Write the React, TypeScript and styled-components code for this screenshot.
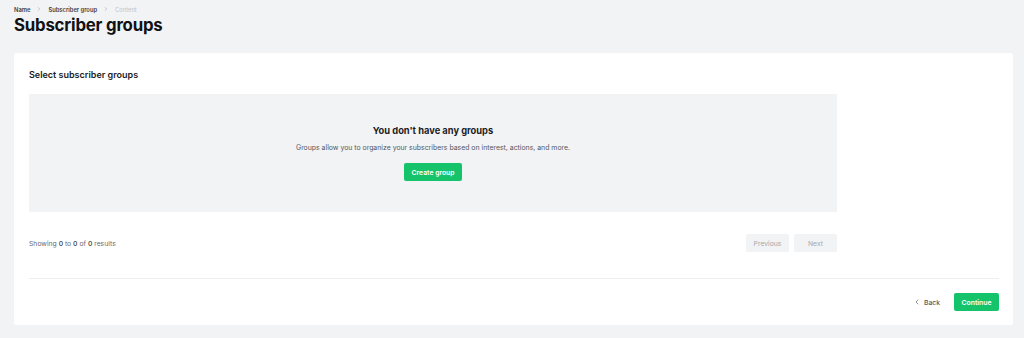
import styled, { createGlobalStyle } from 'styled-components'
import { ChevronLeft, ChevronRight } from 'lucide-react'

const GlobalStyle = createGlobalStyle`
	body {
		margin: 0;
		background: #f2f3f5;
		font-family: 'Inter', 'Liberation Sans', sans-serif;
		color: #1b1c1f;
	}
`

const Page = styled.div`
	padding: 4px 11px 13px 14px;
`

const Breadcrumb = styled.div`
	display: flex;
	align-items: center;
	gap: 6px;
	height: 10px;
	font-size: 5.8px;
	color: #3a3b3f;
`

const Crumb = styled.span<{ $muted?: boolean }>`
	color: ${p => (p.$muted ? '#c2c4c8' : '#404145')};
	font-weight: ${p => (p.$muted ? 400 : 600)};
`

const Sep = styled(ChevronRight)`
	color: #9a9ca1;
`

const Title = styled.h1`
	margin: 1px 0 17px;
	font-size: 16.8px;
	line-height: 21px;
	font-weight: 700;
	letter-spacing: -0.2px;
	color: #111214;
`

const Card = styled.div`
	background: #fff;
	border-radius: 2px;
	padding: 16px 14px 14px 15px;
`

const Upper = styled.div`
	max-width: 808px;
`

const SectionTitle = styled.h2`
	margin: 0 0 13px;
	font-size: 9px;
	line-height: 12px;
	font-weight: 600;
	color: #1b1c1f;
`

const EmptyBox = styled.div`
	background: #f2f3f5;
	height: 118px;
	box-sizing: border-box;
	padding: 30px 0;
	display: flex;
	flex-direction: column;
	align-items: center;
`

const EmptyTitle = styled.div`
	font-size: 9.3px;
	line-height: 13px;
	font-weight: 700;
	color: #1b1c1f;
`

const EmptyText = styled.div`
	margin-top: 6px;
	font-size: 6.9px;
	line-height: 10px;
	color: #55575c;
`

const GreenButton = styled.button`
	border: none;
	border-radius: 2px;
	background: #14c36a;
	color: #fff;
	font-family: inherit;
	font-size: 6.8px;
	font-weight: 600;
	height: 18px;
	padding: 0 8px;
	cursor: pointer;
`

const CreateButton = styled(GreenButton)`
	margin-top: 10px;
`

const Pager = styled.div`
	margin-top: 22px;
	display: flex;
	align-items: center;
	justify-content: space-between;
`

const Showing = styled.div`
	font-size: 6.8px;
	color: #6a6c71;
	b {
		font-weight: 500;
		color: #3a3b3f;
	}
`

const PagerButtons = styled.div`
	display: flex;
	gap: 5px;
`

const PageButton = styled.button`
	border: none;
	border-radius: 2px;
	background: #f2f3f5;
	color: #a6a8ad;
	font-family: inherit;
	font-size: 6.8px;
	height: 18px;
	width: 43px;
`

const Divider = styled.div`
	height: 1px;
	background: #eceef0;
	margin: 26px 0 14px;
`

const Footer = styled.div`
	display: flex;
	justify-content: flex-end;
	align-items: center;
	gap: 14px;
`

const BackButton = styled.button`
	border: none;
	background: none;
	display: flex;
	align-items: center;
	gap: 3px;
	padding: 0;
	font-family: inherit;
	font-size: 6.8px;
	font-weight: 500;
	color: #55575c;
`

const ContinueButton = styled(GreenButton)`
	width: 45px;
	padding: 0;
`

const App = () => {
	return (
		<Page>
			<GlobalStyle />
			<Breadcrumb>
				<Crumb>Name</Crumb>
				<Sep size={6} strokeWidth={2} />
				<Crumb>Subscriber group</Crumb>
				<Sep size={6} strokeWidth={2} />
				<Crumb $muted>Content</Crumb>
			</Breadcrumb>
			<Title>Subscriber groups</Title>
			<Card>
				<Upper>
					<SectionTitle>Select subscriber groups</SectionTitle>
					<EmptyBox>
						<EmptyTitle>You don't have any groups</EmptyTitle>
						<EmptyText>Groups allow you to organize your subscribers based on interest, actions, and more.</EmptyText>
						<CreateButton>Create group</CreateButton>
					</EmptyBox>
					<Pager>
						<Showing>
							Showing <b>0</b> to <b>0</b> of <b>0</b> results
						</Showing>
						<PagerButtons>
							<PageButton>Previous</PageButton>
							<PageButton>Next</PageButton>
						</PagerButtons>
					</Pager>
				</Upper>
				<Divider />
				<Footer>
					<BackButton>
						<ChevronLeft size={8} strokeWidth={2} />
						Back
					</BackButton>
					<ContinueButton>Continue</ContinueButton>
				</Footer>
			</Card>
		</Page>
	)
}

export default App
